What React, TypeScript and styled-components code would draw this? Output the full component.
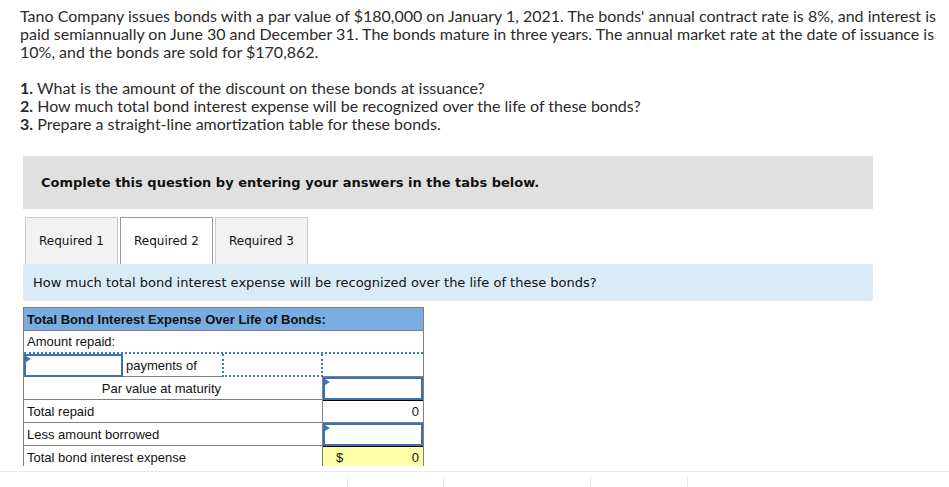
import React from "react";
import styled, { createGlobalStyle } from "styled-components";

const Global = createGlobalStyle`
  html, body { margin: 0; padding: 0; background: #fff; }
  body { width: 949px; height: 487px; overflow: hidden; }
  * { box-sizing: border-box; }
`;

const Page = styled.div`
  display: flex;
  flex-direction: column;
  width: 949px;
  height: 487px;
`;

const Main = styled.div`
  height: 466px;
  overflow: hidden;
`;

const Intro = styled.div`
  padding: 7px 9px 0 20px;
  font-family: Lato, "Liberation Sans", sans-serif;
  font-size: 16px;
  line-height: 18px;
  color: #2b2b2b;
`;

const Para = styled.p`
  margin: 0 0 18px 0;
`;

const List = styled.div`
  display: flex;
  flex-direction: column;
`;

const Num = styled.b`
  font-weight: 700;
`;

const Section = styled.div`
  margin: 23px 0 0 23px;
  width: 850px;
`;

const Notice = styled.div`
  height: 53px;
  background: #e0e0e0;
  display: flex;
  align-items: center;
  padding: 0 0 0 18px;
  font-family: "DejaVu Sans", Verdana, sans-serif;
  font-weight: 700;
  font-size: 13px;
  color: #111;
`;

const Tabs = styled.div`
  display: flex;
  gap: 2px;
  margin: 8px 0 0 2px;
`;

const Tab = styled.div<{ $active?: boolean }>`
  width: 93px;
  height: 47px;
  display: flex;
  align-items: center;
  justify-content: center;
  font-family: "DejaVu Sans", Verdana, sans-serif;
  font-size: 12px;
  color: #111;
  background: ${(p) => (p.$active ? "#fff" : "#f2f2f2")};
  border: 1px solid ${(p) => (p.$active ? "#9a9a9a" : "#c8c8c8")};
  border-bottom: none;
`;

const Prompt = styled.div`
  height: 37px;
  background: #daebf8;
  display: flex;
  align-items: center;
  padding-left: 10px;
  font-family: "DejaVu Sans", Verdana, sans-serif;
  font-size: 13px;
  color: #111;
`;

const Grid = styled.div`
  margin: 6px 0 0 0;
  width: 401px;
  display: grid;
  grid-template-columns: 99px 99px 101px 100px;
  grid-auto-rows: 23px;
  border: 1px solid #808080;
  border-bottom: none;
  font-family: "Liberation Sans", Arial, sans-serif;
  font-size: 13px;
  color: #111;
`;

const Cell = styled.div<{
  $span?: number;
  $align?: "left" | "right";
  $bottom?: string;
  $right?: string;
  $left?: string;
  $top?: string;
  $pr?: number;
}>`
  grid-column: span ${(p) => p.$span ?? 1};
  display: flex;
  align-items: center;
  justify-content: ${(p) => (p.$align === "right" ? "flex-end" : "flex-start")};
  padding: 0 ${(p) => p.$pr ?? 3}px 0 3px;
  border-bottom: ${(p) => p.$bottom ?? "1px solid #808080"};
  border-right: ${(p) => p.$right ?? "none"};
  border-left: ${(p) => p.$left ?? "none"};
  border-top: ${(p) => p.$top ?? "none"};
  white-space: nowrap;
`;

const Header = styled(Cell)`
  background: #78ace3;
  font-weight: 700;
`;

const InputCell = styled.div`
  position: relative;
  border: 2px solid #3d6fb3;
  background: #fff;
`;

const Flag = styled.span`
  position: absolute;
  left: 0;
  top: 0;
  width: 0;
  height: 0;
  border-top: 3px solid transparent;
  border-bottom: 3px solid transparent;
  border-left: 5px solid #3d75c0;
`;

const ValueCell = styled(Cell)<{ $yellow?: boolean }>`
  justify-content: space-between;
  background: ${(p) => (p.$yellow ? "#ffffa8" : "#fff")};
  border-top: 1px solid #000;
  padding: 0 4px 0 13px;
`;

const Footer = styled.div`
  margin-top: 5px;
  flex: 1;
  border-top: 1px solid #e8e8e8;
  display: flex;
  padding-top: 5px;
`;

const FootSeg = styled.div<{ $w: number }>`
  width: ${(p) => p.$w}px;
  border-right: 1px solid #e8e8e8;
`;

const dotted = "2px dotted #3f78c4";

function Input() {
  return (
    <InputCell>
      <Flag />
    </InputCell>
  );
}

export default function App() {
  return (
    <>
      <Global />
      <Page>
        <Main>
          <Intro>
            <Para>
              Tano Company issues bonds with a par value of $180,000 on January 1, 2021. The bonds' annual contract rate
              is 8%, and interest is paid semiannually on June 30 and December 31. The bonds mature in three years. The
              annual market rate at the date of issuance is 10%, and the bonds are sold for $170,862.
            </Para>
            <List>
              <div>
                <Num>1.</Num> What is the amount of the discount on these bonds at issuance?
              </div>
              <div>
                <Num>2.</Num> How much total bond interest expense will be recognized over the life of these bonds?
              </div>
              <div>
                <Num>3.</Num> Prepare a straight-line amortization table for these bonds.
              </div>
            </List>
          </Intro>
          <Section>
            <Notice>Complete this question by entering your answers in the tabs below.</Notice>
            <Tabs>
              <Tab>Required 1</Tab>
              <Tab $active>Required 2</Tab>
              <Tab>Required 3</Tab>
            </Tabs>
            <Prompt>How much total bond interest expense will be recognized over the life of these bonds?</Prompt>
            <Grid>
              <Header $span={4}>Total Bond Interest Expense Over Life of Bonds:</Header>
              <Cell $span={4} $bottom={dotted}>Amount repaid:</Cell>
              <Input />
              <Cell>payments of</Cell>
              <Cell $left={dotted} $right={dotted} $bottom={dotted} />
              <Cell />
              <Cell $span={3} $align="right" $right="1px solid #808080" $pr={101}>
                Par value at maturity
              </Cell>
              <Input />
              <Cell $span={3} $right="1px solid #808080">Total repaid</Cell>
              <ValueCell>
                <span />
                <span>0</span>
              </ValueCell>
              <Cell $span={3} $right="1px solid #808080">Less amount borrowed</Cell>
              <Input />
              <Cell $span={3} $right="1px solid #808080">Total bond interest expense</Cell>
              <ValueCell $yellow>
                <span>$</span>
                <span>0</span>
              </ValueCell>
            </Grid>
          </Section>
        </Main>
        <Footer>
          <FootSeg $w={348} />
          <FootSeg $w={96} />
          <FootSeg $w={147} />
          <FootSeg $w={97} />
        </Footer>
      </Page>
    </>
  );
}
